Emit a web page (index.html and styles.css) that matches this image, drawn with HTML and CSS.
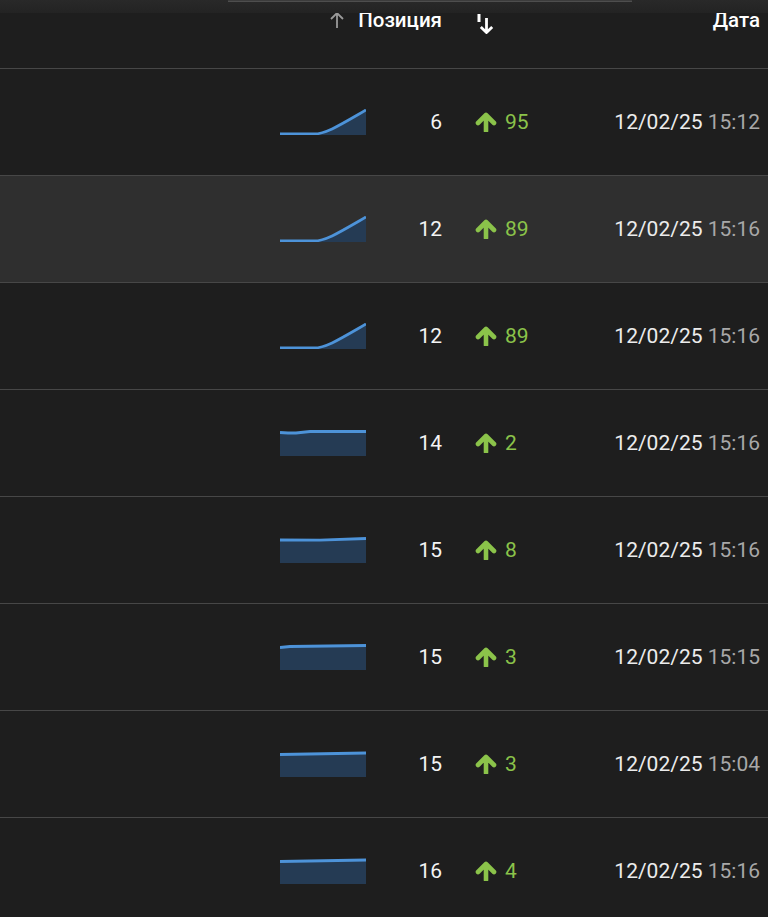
FILE: index.html
```html
<!DOCTYPE html>
<html lang="ru">
<head>
<meta charset="utf-8">
<title>Позиции</title>
<link rel="stylesheet" href="styles.css">
</head>
<body>
<div class="table">
  <div class="scrollbar"><div class="thumb"></div></div>
  <div class="row head">
    <div class="c-empty"></div>
    <div class="c-spark"></div>
    <div class="c-pos head-pos">
      <svg class="sort-arrow" width="16" height="18" viewBox="0 0 16 18"><path d="M8 17V2 M2 8l6-6 6 6" fill="none" stroke="#9a9a9a" stroke-width="1.8"/></svg>
      <span>Позиция</span>
    </div>
    <div class="c-gap"></div>
    <div class="c-change">
      <svg class="sort-icon" width="18" height="22" viewBox="0 0 18 22"><rect x="0.5" y="2" width="3" height="8" fill="#fff"/><path d="M9.5 6v14 M3.8 15l5.7 5.5 5.7-5.5" fill="none" stroke="#fff" stroke-width="2.8"/></svg>
    </div>
    <div class="c-date head-date">Дата</div>
  </div>

  <div class="row">
    <div class="c-empty"></div>
    <div class="c-spark"><svg width="86" height="26" viewBox="0 0 86 26"><path d="M0 25 L34 25 C46 25 60 16 86 1 L86 26 L0 26Z" class="area"/><path d="M0 25 L34 25 C46 25 60 16 86 1" class="line"/></svg></div>
    <div class="c-pos">6</div>
    <div class="c-gap"></div>
    <div class="c-change"><svg class="up" width="22" height="20" viewBox="0 0 22 20"><path d="M11 19V4 M3 11l8-8 8 8"/></svg><span>95</span></div>
    <div class="c-date">12/02/25 <span class="time">15:12</span></div>
  </div>

  <div class="row active">
    <div class="c-empty"></div>
    <div class="c-spark"><svg width="86" height="26" viewBox="0 0 86 26"><path d="M0 25 L34 25 C46 25 60 16 86 1 L86 26 L0 26Z" class="area"/><path d="M0 25 L34 25 C46 25 60 16 86 1" class="line"/></svg></div>
    <div class="c-pos">12</div>
    <div class="c-gap"></div>
    <div class="c-change"><svg class="up" width="22" height="20" viewBox="0 0 22 20"><path d="M11 19V4 M3 11l8-8 8 8"/></svg><span>89</span></div>
    <div class="c-date">12/02/25 <span class="time">15:16</span></div>
  </div>

  <div class="row">
    <div class="c-empty"></div>
    <div class="c-spark"><svg width="86" height="26" viewBox="0 0 86 26"><path d="M0 25 L34 25 C46 25 60 16 86 1 L86 26 L0 26Z" class="area"/><path d="M0 25 L34 25 C46 25 60 16 86 1" class="line"/></svg></div>
    <div class="c-pos">12</div>
    <div class="c-gap"></div>
    <div class="c-change"><svg class="up" width="22" height="20" viewBox="0 0 22 20"><path d="M11 19V4 M3 11l8-8 8 8"/></svg><span>89</span></div>
    <div class="c-date">12/02/25 <span class="time">15:16</span></div>
  </div>

  <div class="row">
    <div class="c-empty"></div>
    <div class="c-spark"><svg width="86" height="26" viewBox="0 0 86 26"><path d="M0 2.5 L8 3 L16 3 L30 1.5 L86 1.5 L86 26 L0 26Z" class="area"/><path d="M0 2.5 L8 3 L16 3 L30 1.5 L86 1.5" class="line"/></svg></div>
    <div class="c-pos">14</div>
    <div class="c-gap"></div>
    <div class="c-change"><svg class="up" width="22" height="20" viewBox="0 0 22 20"><path d="M11 19V4 M3 11l8-8 8 8"/></svg><span>2</span></div>
    <div class="c-date">12/02/25 <span class="time">15:16</span></div>
  </div>

  <div class="row">
    <div class="c-empty"></div>
    <div class="c-spark"><svg width="86" height="26" viewBox="0 0 86 26"><path d="M0 3 L40 3.2 L86 1.5 L86 26 L0 26Z" class="area"/><path d="M0 3 L40 3.2 L86 1.5" class="line"/></svg></div>
    <div class="c-pos">15</div>
    <div class="c-gap"></div>
    <div class="c-change"><svg class="up" width="22" height="20" viewBox="0 0 22 20"><path d="M11 19V4 M3 11l8-8 8 8"/></svg><span>8</span></div>
    <div class="c-date">12/02/25 <span class="time">15:16</span></div>
  </div>

  <div class="row">
    <div class="c-empty"></div>
    <div class="c-spark"><svg width="86" height="26" viewBox="0 0 86 26"><path d="M0 3.5 L10 2.5 L86 1.5 L86 26 L0 26Z" class="area"/><path d="M0 3.5 L10 2.5 L86 1.5" class="line"/></svg></div>
    <div class="c-pos">15</div>
    <div class="c-gap"></div>
    <div class="c-change"><svg class="up" width="22" height="20" viewBox="0 0 22 20"><path d="M11 19V4 M3 11l8-8 8 8"/></svg><span>3</span></div>
    <div class="c-date">12/02/25 <span class="time">15:15</span></div>
  </div>

  <div class="row">
    <div class="c-empty"></div>
    <div class="c-spark"><svg width="86" height="26" viewBox="0 0 86 26"><path d="M0 3.5 L86 2 L86 26 L0 26Z" class="area"/><path d="M0 3.5 L86 2" class="line"/></svg></div>
    <div class="c-pos">15</div>
    <div class="c-gap"></div>
    <div class="c-change"><svg class="up" width="22" height="20" viewBox="0 0 22 20"><path d="M11 19V4 M3 11l8-8 8 8"/></svg><span>3</span></div>
    <div class="c-date">12/02/25 <span class="time">15:04</span></div>
  </div>

  <div class="row">
    <div class="c-empty"></div>
    <div class="c-spark"><svg width="86" height="26" viewBox="0 0 86 26"><path d="M0 3.5 L86 2 L86 26 L0 26Z" class="area"/><path d="M0 3.5 L86 2" class="line"/></svg></div>
    <div class="c-pos">16</div>
    <div class="c-gap"></div>
    <div class="c-change"><svg class="up" width="22" height="20" viewBox="0 0 22 20"><path d="M11 19V4 M3 11l8-8 8 8"/></svg><span>4</span></div>
    <div class="c-date">12/02/25 <span class="time">15:16</span></div>
  </div>
</div>
</body>
</html>
```
FILE: styles.css
```css
* { box-sizing: border-box; }
html, body {
  margin: 0;
  padding: 0;
  background: #1e1e1e;
  font-family: Roboto, "Liberation Sans", sans-serif;
  color: #f4f4f4;
  overflow: hidden;
}
.table {
  width: 768px;
  position: relative;
}
.scrollbar {
  position: absolute;
  top: 0;
  left: 0;
  right: 0;
  height: 13px;
  background: linear-gradient(#292929, #232323);
}
.thumb {
  margin-left: 228px;
  width: 404px;
  height: 2px;
  background: #3c3c3c;
  border-bottom: 1px solid #4e4e4e;
}
.row {
  display: grid;
  grid-template-columns: 1fr 86px 76px 33px 125px 160px;
  padding-right: 8px;
  height: 107px;
  align-items: center;
  border-top: 1px solid #474747;
  font-size: 21px;
}
.row.active {
  background: #2f2f2f;
}
.row.head {
  height: 68px;
  border-top: none;
  align-items: start;
  padding-top: 8px;
  font-size: 20.5px;
  font-weight: 500;
  color: #ffffff;
}
.c-spark svg { display: block; }
.c-spark .area { fill: #253b54; }
.c-spark .line { fill: none; stroke: #4d93d9; stroke-width: 2.8; }
.c-pos {
  text-align: right;
}
.head-pos {
  display: flex;
  justify-content: flex-end;
  align-items: center;
  gap: 13px;
  white-space: nowrap;
  margin-left: -140px;
}
.sort-icon { display: block; margin-left: 2px; margin-top: 4px; }
.c-change {
  display: flex;
  align-items: center;
  gap: 8px;
  color: #8bc34a;
}
.up { display: block; }
.up path {
  fill: none;
  stroke: #8bc34a;
  stroke-width: 4.6;
  stroke-linecap: round;
  stroke-linejoin: round;
}
.c-date {
  text-align: right;
  white-space: nowrap;
  color: #ececec;
}
.time { color: #a8a8a8; }
.head-date { color: #ffffff; }
```
